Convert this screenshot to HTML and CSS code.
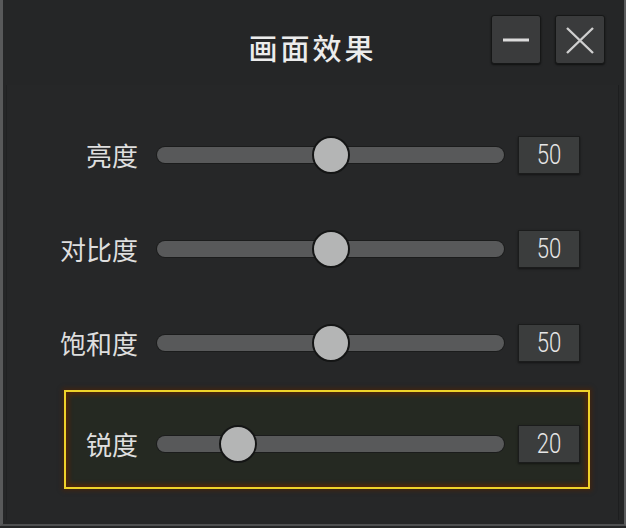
FILE: index.html
```html
<!DOCTYPE html>
<html lang="zh">
<head>
<meta charset="utf-8">
<title>画面效果</title>
<link rel="stylesheet" href="styles.css">
</head>
<body>
<div class="window">
  <div class="header">
    <div class="spacer"></div>
    <div class="title">画面效果</div>
    <div class="buttons">
      <button class="btn" aria-label="最小化">
        <svg width="30" height="30" viewBox="0 0 30 30"><line x1="2" y1="15" x2="28" y2="15" stroke="#dcdcdc" stroke-width="3"/></svg>
      </button>
      <button class="btn" aria-label="关闭">
        <svg width="30" height="30" viewBox="0 0 30 30"><path d="M2 3 L28 28 M28 3 L2 28" stroke="#cfcfcf" stroke-width="2.4" fill="none"/></svg>
      </button>
    </div>
  </div>
  <div class="panel">
    <div class="row">
      <div class="label"><span>亮度</span></div>
      <div class="track"><div class="thumb" style="left: calc((100% - 38px) * 0.5)"></div></div>
      <div class="value"><span>50</span></div>
    </div>
    <div class="row">
      <div class="label"><span>对比度</span></div>
      <div class="track"><div class="thumb" style="left: calc((100% - 38px) * 0.5)"></div></div>
      <div class="value"><span>50</span></div>
    </div>
    <div class="row">
      <div class="label"><span>饱和度</span></div>
      <div class="track"><div class="thumb" style="left: calc((100% - 38px) * 0.5)"></div></div>
      <div class="value"><span>50</span></div>
    </div>
    <div class="row focused">
      <div class="label"><span>锐度</span></div>
      <div class="track"><div class="thumb" style="left: calc((100% - 38px) * 0.2)"></div></div>
      <div class="value"><span>20</span></div>
    </div>
  </div>
</div>
</body>
</html>
```
FILE: styles.css
```css
* { box-sizing: border-box; }
html, body { margin: 0; padding: 0; background: #252627; }
body {
  width: 626px;
  height: 528px;
  overflow: hidden;
  font-family: "Noto Sans CJK SC", "Noto Sans", sans-serif;
}
.window {
  width: 626px;
  height: 526px;
  background: #252627;
  border-left: 3px solid #58595a;
  border-right: 2px solid #5a5b5c;
  border-bottom: 2px solid #4e4f50;
  display: flex;
  flex-direction: column;
}
.header {
  height: 85px;
  display: grid;
  grid-template-columns: 1fr auto 1fr;
  align-items: start;
}
.title {
  margin-top: 23px;
  margin-left: -2px;
  font-size: 29px;
  line-height: 48px;
  font-weight: 500;
  letter-spacing: 3px;
  color: #ececec;
}
.buttons {
  justify-self: end;
  display: flex;
  gap: 14px;
  margin-top: 15px;
  margin-right: 19px;
}
.btn {
  width: 50px;
  height: 49px;
  padding: 0;
  border: 1px solid #161717;
  border-radius: 3px;
  background: #3a3b3c;
  box-shadow: 0 1px 2px rgba(0,0,0,0.6);
  display: flex;
  align-items: center;
  justify-content: center;
}
.btn svg { display: block; }
.panel {
  flex: 1;
  margin: 0 5px 4px 3px;
  border-left: 1px solid #202122;
  border-right: 1px solid #1d1e1f;
  background: #262728;
  padding-top: 23px;
  display: flex;
  flex-direction: column;
}
.row {
  width: 526px;
  margin-left: 57px;
  height: 94px;
  border: 2px solid transparent;
  padding-right: 8px;
  display: flex;
  align-items: center;
}
.row.focused {
  height: 99px;
  padding-top: 9px;
  border-color: #efd22a;
  background: #252922;
  box-shadow: inset 0 0 4px 3px rgba(90, 38, 5, 0.8), 0 0 4px 2px rgba(80, 35, 5, 0.6);
}
.label {
  width: 72px;
  flex: none;
  display: flex;
  justify-content: flex-end;
  white-space: nowrap;
  font-size: 26px;
  line-height: 36px;
  color: #dedede;
}
.track {
  position: relative;
  flex: none;
  width: 347px;
  height: 16px;
  margin-left: 19px;
  border-radius: 8px;
  background: #58595a;
  box-shadow: 0 0 0 1px #1b1c1c;
}
.thumb {
  position: absolute;
  top: -11px;
  width: 38px;
  height: 38px;
  border-radius: 50%;
  background: #b4b5b5;
  border: 2px solid #141515;
}
.value {
  flex: none;
  width: 62px;
  height: 38px;
  margin-left: 14px;
  background: #3b3d3d;
  border: 1px solid #1b1c1c;
  box-shadow: 0 1px 2px rgba(0,0,0,0.5);
  display: flex;
  align-items: center;
  justify-content: center;
  font-family: "Roboto", "Noto Sans", sans-serif;
  font-weight: 300;
  font-size: 27px;
  color: #e6e6e6;
}
.value span {
  display: inline-block;
  transform: scaleX(0.82);
}
```
